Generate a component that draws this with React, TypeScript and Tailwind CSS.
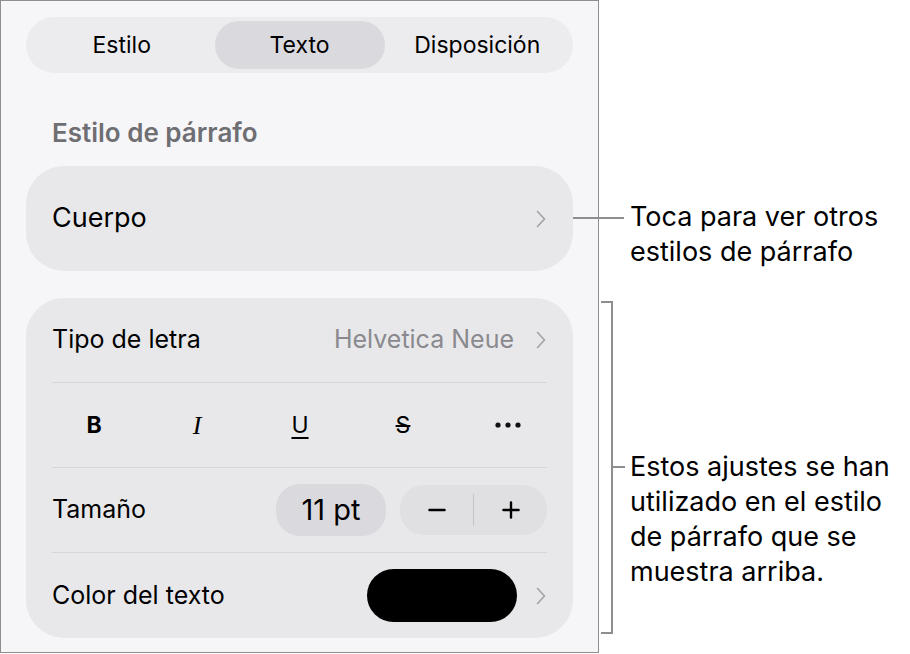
import React from "react";
import { Minus, Plus } from "lucide-react";

const font = { fontFamily: "Inter, 'Noto Sans', sans-serif" };

function Chevron() {
  return (
    <svg width="12" height="20" viewBox="0 0 12 20" className="shrink-0">
      <path d="M2.5 2.5 L9.5 10 L2.5 17.5" fill="none" stroke="#a1a1a6" strokeWidth="1.6" strokeLinecap="round" strokeLinejoin="round" />
    </svg>
  );
}

function Dots() {
  return (
    <svg width="26" height="6" viewBox="0 0 26 6">
      <circle cx="3" cy="3" r="2.6" fill="#111" />
      <circle cx="13" cy="3" r="2.6" fill="#111" />
      <circle cx="23" cy="3" r="2.6" fill="#111" />
    </svg>
  );
}

function Row({ children, last }: { children: React.ReactNode; last?: boolean }) {
  return (
    <div className={"flex h-[85px] items-center " + (last ? "" : "border-b border-[#d6d6da]")}>{children}</div>
  );
}

export default function App() {
  return (
    <div className="relative flex h-[654px] w-[910px] bg-white text-black" style={font}>
      {/* inspector panel */}
      <div className="flex h-[653px] w-[599px] flex-col border border-[#8e8e8e] bg-[#f6f6f8] px-[25px]">
        <div className="mt-[16px] flex h-[56px] items-center rounded-full bg-[#ececef] px-[3px] text-[23px]">
          <div className="flex flex-1 justify-center">Estilo</div>
          <div className="flex h-[48px] w-[170px] items-center justify-center rounded-full bg-[#dadade]">Texto</div>
          <div className="flex flex-1 justify-center">Disposición</div>
        </div>

        <div className="mt-[41px] h-[38px] pl-[26px] text-[26px] leading-[38px] font-semibold text-[#6e6e73]">Estilo de párrafo</div>

        <div className="mt-[14px] flex h-[105px] items-center justify-between rounded-[38px] bg-[#e8e8eb] pl-[26px] pr-[26px]">
          <span className="text-[27px]">Cuerpo</span>
          <Chevron />
        </div>

        <div className="mt-[27px] flex flex-col rounded-[38px] bg-[#e8e8eb] pl-[26px] pr-[26px] text-[25px]">
          <Row>
            <span className="flex-1">Tipo de letra</span>
            <span className="mr-[21px] text-[#8a8a8e]">Helvetica Neue</span>
            <Chevron />
          </Row>
          <Row>
            <div className="flex flex-1 items-center justify-between pl-[31px] pr-[26px]">
              <span className="w-[22px] text-center text-[23px] font-bold">B</span>
              <span className="w-[22px] text-center text-[26px] italic" style={{ fontFamily: "'Liberation Serif', serif" }}>I</span>
              <span className="w-[22px] text-center text-[23px] underline decoration-[1.5px] underline-offset-[4px]">U</span>
              <span className="w-[22px] text-center text-[23px] line-through decoration-[1.5px]">S</span>
              <Dots />
            </div>
          </Row>
          <Row>
            <span className="flex-1">Tamaño</span>
            <div className="flex h-[52px] w-[110px] items-center justify-center rounded-[24px] bg-[#dadade] text-[29px]">11 pt</div>
            <div className="ml-[14px] flex h-[50px] w-[147px] items-center rounded-[24px] bg-[#e0e0e3]">
              <div className="flex flex-1 items-center justify-center">
                <Minus size={26} strokeWidth={2.2} />
              </div>
              <div className="h-[32px] w-px bg-[#c4c4c8]" />
              <div className="flex flex-1 items-center justify-center">
                <Plus size={26} strokeWidth={2.2} />
              </div>
            </div>
          </Row>
          <Row last>
            <span className="flex-1">Color del texto</span>
            <div className="mr-[18px] h-[53px] w-[150px] rounded-full bg-black" />
            <Chevron />
          </Row>
        </div>
      </div>

      {/* callouts */}
      <div className="flex flex-1 flex-col pl-[31px] text-[27px] leading-[35px]">
        <div className="mt-[199px]">
          Toca para ver otros
          <br />
          estilos de párrafo
        </div>
        <div className="mt-[180px]">
          Estos ajustes se han
          <br />
          utilizado en el estilo
          <br />
          de párrafo que se
          <br />
          muestra arriba.
        </div>
      </div>

      {/* leader lines */}
      <div className="absolute left-[573px] top-[217px] h-[2px] w-[51px] bg-[#8e8e8e]" />
      <div className="absolute left-[601px] top-[301px] h-[333px] w-[12px] border-y-2 border-r-2 border-[#8e8e8e]" />
      <div className="absolute left-[612px] top-[466px] h-[2px] w-[13px] bg-[#8e8e8e]" />
    </div>
  );
}
